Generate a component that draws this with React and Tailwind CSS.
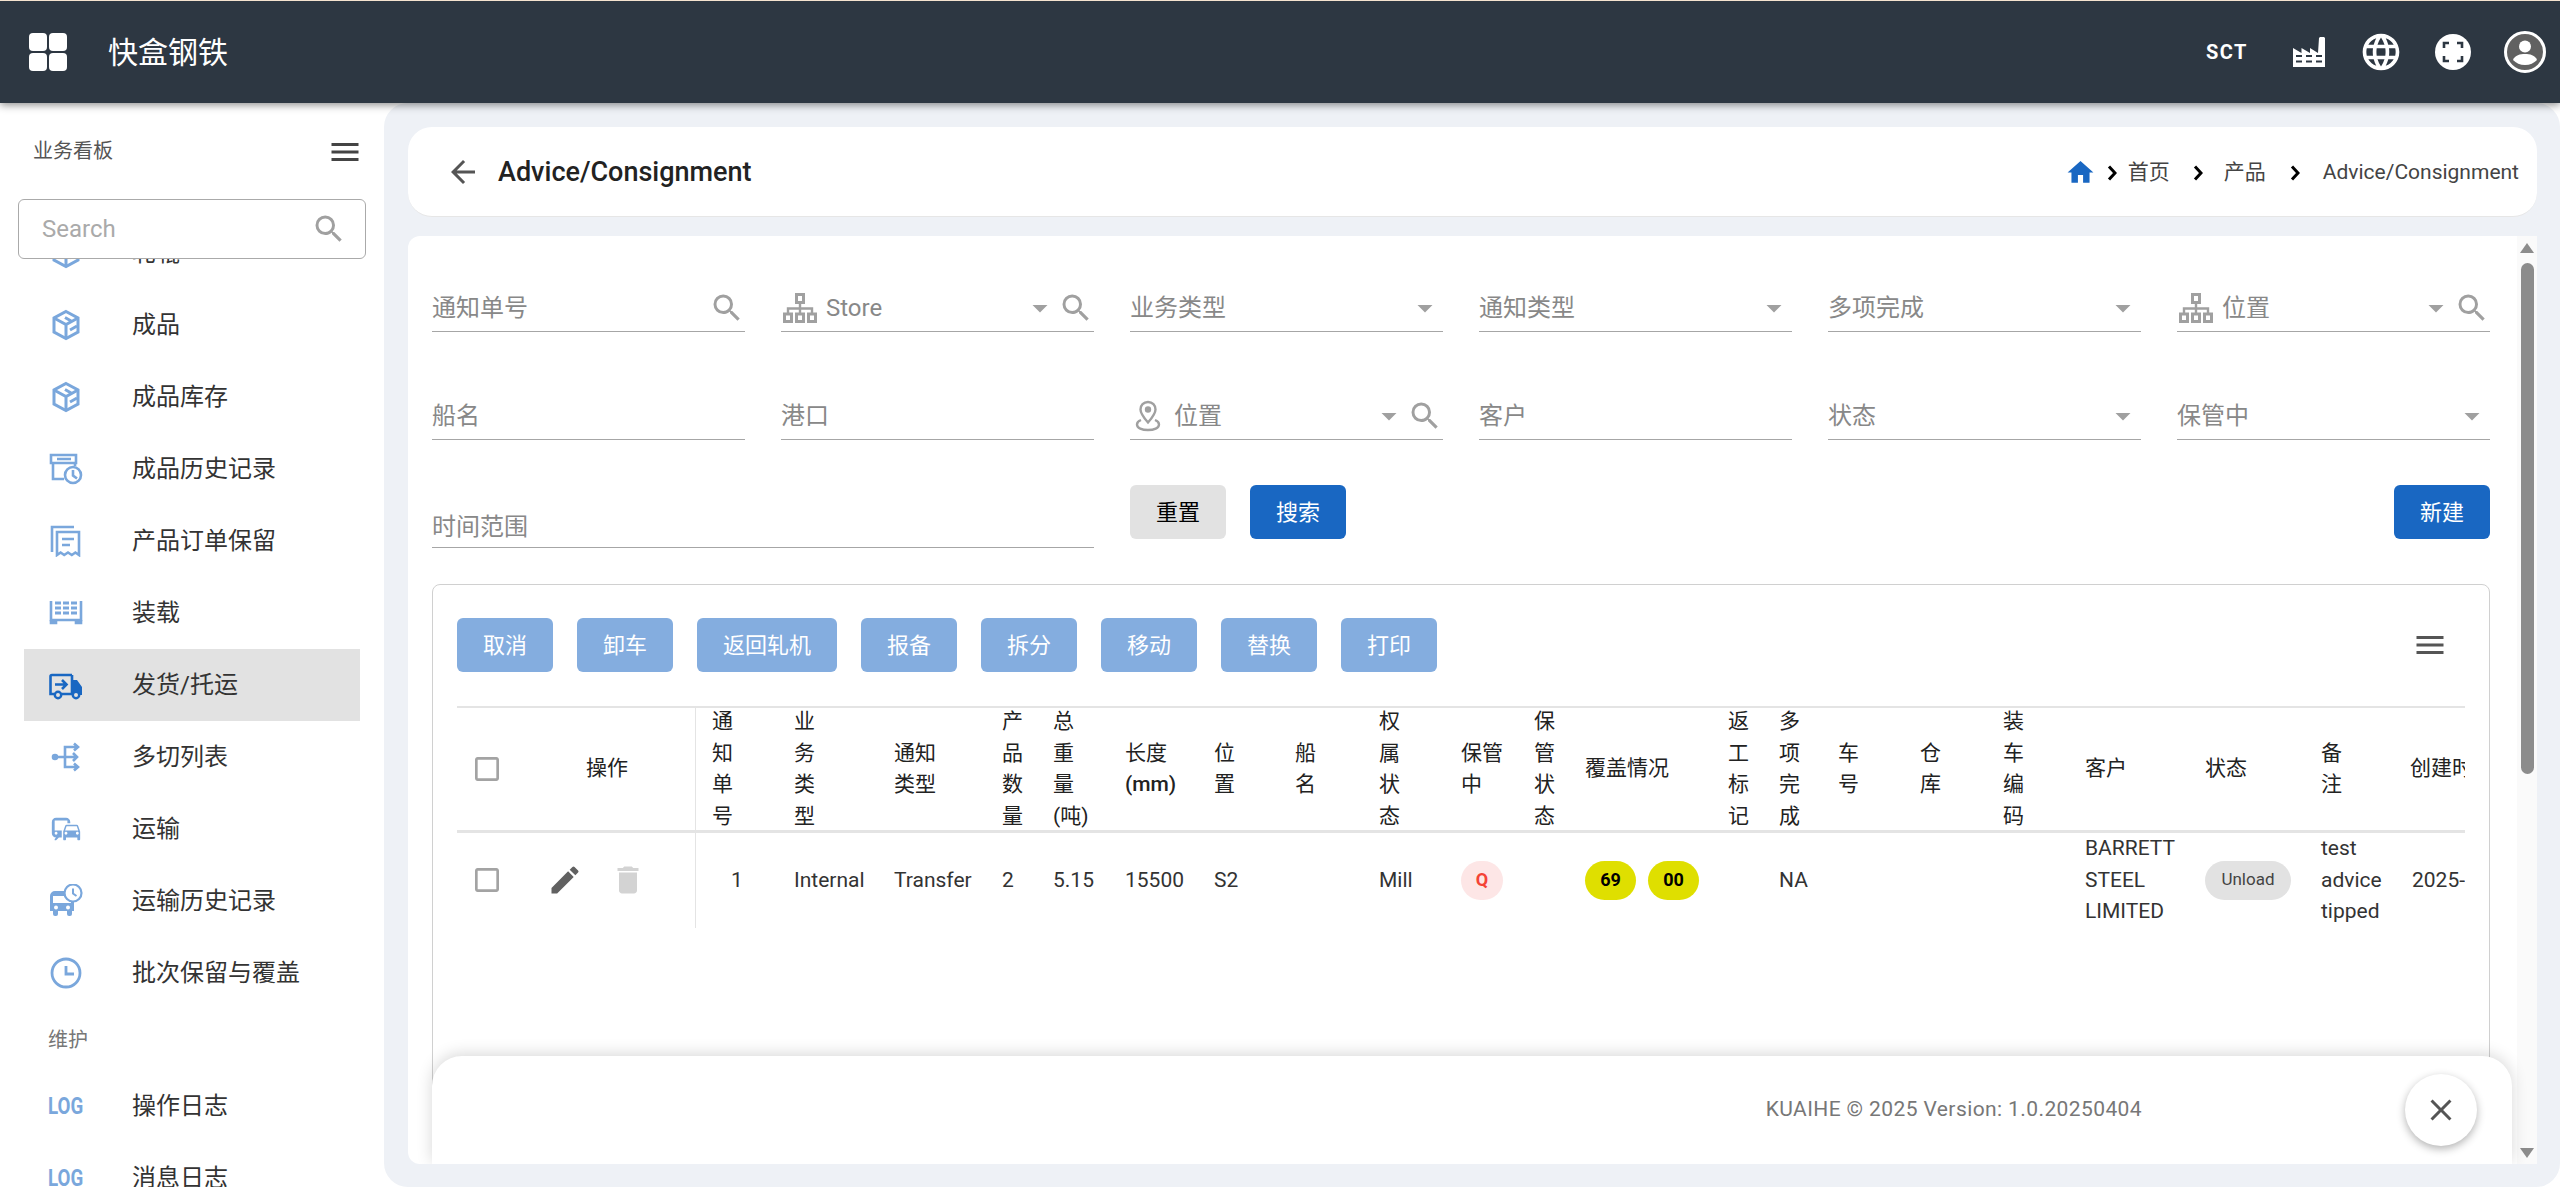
import {
  MdMenu,
  MdSearch,
  MdArrowBack,
  MdHome,
  MdLanguage,
  MdEdit,
  MdDelete,
  MdClose,
  MdCheckBoxOutlineBlank,
  MdArrowDropDown,
  MdCommute,
} from "react-icons/md";

const BoxIcon = () => (
  <svg width="32" height="32" viewBox="0 0 32 32" fill="none" stroke="currentColor" strokeWidth="3">
    <path d="M16 2.500 28 9v14l-12 6.500L4 23V9z" />
    <path d="M4 9l12 6.500L28 9M16 15.500v14M22 12.500l-7-4M27 17l-7 4" />
  </svg>
);

const HistoryIcon = () => (
  <svg width="34" height="32" viewBox="0 0 34 32" fill="none" stroke="currentColor" strokeWidth="2.600">
    <path d="M2 2h25v8H2z" />
    <path d="M4 10v16h11M26 10v3M8 6h14" />
    <circle cx="24" cy="22" r="8" />
    <path d="M24 17v5.500l4 3" />
  </svg>
);

const ReceiptIcon = () => (
  <svg width="32" height="32" viewBox="0 0 32 32" fill="none" stroke="currentColor" strokeWidth="2.600">
    <path d="M24 2H2v25" />
    <path d="M7 7h22v23l-3.600-2.500-3.600 2.500-3.800-2.500-3.800 2.500-3.600-2.500L7 30z" />
    <path d="M12 14h12M12 20h8" />
  </svg>
);

const PalletIcon = () => (
  <svg width="34" height="32" viewBox="0 0 34 32" fill="none" stroke="currentColor">
    <path d="M2 4v19h30V4" strokeWidth="2.600" />
    <path d="M6 6h22M6 11h22M6 16h22" strokeWidth="2.800" strokeDasharray="6 2" />
    <path d="M2 23v3h5v-3M27 23v3h5v-3" strokeWidth="2.600" fill="currentColor" />
  </svg>
);

const TruckIcon = () => (
  <svg width="34" height="32" viewBox="0 0 34 32" fill="none">
    <path d="M23 6H3a1.500 1.500 0 0 0-1.500 1.500V25H6" stroke="currentColor" strokeWidth="2.600" />
    <path d="M23 6v19H12" stroke="currentColor" strokeWidth="2.600" />
    <path d="M23 11h5l5 7v8h-4l-1-3h-5z" fill="currentColor" />
    <path d="M6 15.500h11M13 11l4.500 4.500L13 20" stroke="currentColor" strokeWidth="2.600" />
    <circle cx="9" cy="26" r="3.200" stroke="currentColor" strokeWidth="2.400" fill="#e2e2e2" />
    <circle cx="27" cy="26" r="3.200" stroke="currentColor" strokeWidth="2.400" fill="#e2e2e2" />
  </svg>
);

const SplitIcon = () => (
  <svg width="32" height="32" viewBox="0 0 32 32" fill="none" stroke="currentColor" strokeWidth="2.600">
    <circle cx="5" cy="16" r="2" fill="currentColor" />
    <path d="M5 16h22M23 12l4 4-4 4" />
    <path d="M15 16V6h13M24 2.500 28 6l-4 3.500" />
    <path d="M15 16v10h13M24 22.500l4 3.500-4 3.500" />
  </svg>
);

const BusClockIcon = () => (
  <svg width="34" height="34" viewBox="0 0 34 34">
    <path
      d="M1 12a5 5 0 0 1 5-5h14a5 5 0 0 1 5 5v15h-2v3a2 2 0 0 1-2 2h-1a2 2 0 0 1-2-2v-3H9v3a2 2 0 0 1-2 2H6a2 2 0 0 1-2-2v-3H1z"
      fill="currentColor"
    />
    <rect x="4" y="12" width="18" height="7" fill="#fff" />
    <circle cx="7" cy="23.500" r="2" fill="#fff" />
    <circle cx="19" cy="23.500" r="2" fill="#fff" />
    <circle cx="24" cy="9" r="8.500" fill="#fff" stroke="currentColor" strokeWidth="2.200" />
    <path d="M24 4.500V9.500l3.500 2.500" fill="none" stroke="currentColor" strokeWidth="2" />
  </svg>
);

const ClockIcon = () => (
  <svg width="32" height="32" viewBox="0 0 32 32" fill="none" stroke="currentColor" strokeWidth="2.800">
    <circle cx="16" cy="16" r="14" />
    <path d="M16 9v8h8" />
  </svg>
);

const LogIcon = () => <span className="text-[24px] font-bold leading-none scale-x-[0.78] block">LOG</span>;

const PinIcon = () => (
  <svg width="26" height="32" viewBox="0 0 26 32" fill="none" stroke="#a0a0a0" strokeWidth="2.400">
    <path d="M13 2c-4.500 0-7.500 3.300-7.500 7.500 0 4.500 4 9 7.500 13 3.500-4 7.500-8.500 7.500-13C20.500 5.300 17.500 2 13 2z" />
    <circle cx="13" cy="9.500" r="2" fill="#a0a0a0" />
    <path d="M6 20c-2.500 1-4 2.500-4 4.500C2 28 7 30 13 30s11-2 11-5.500c0-2-1.500-3.500-4-4.500" />
  </svg>
);

const TreeIcon = () => (
  <svg width="34" height="30" viewBox="0 0 34 30" fill="none" stroke="#a0a0a0" className="mr-[9px] ml-[2px]">
    <rect x="13.500" y="1.500" width="7" height="8" strokeWidth="3" />
    <path d="M17 9v12M5 21v-5.500h24V21" strokeWidth="2.400" />
    <rect x="1.500" y="21" width="7" height="7.500" strokeWidth="3" />
    <rect x="13.500" y="21" width="7" height="7.500" strokeWidth="3" />
    <rect x="25.500" y="21" width="7" height="7.500" strokeWidth="3" />
  </svg>
);

const FactoryIcon = () => (
  <svg width="32" height="30" viewBox="0 0 32 30" className="ml-[45px]">
    <path d="M0 11l8.500 5v-5l8.500 5v-5l8 5L26 1l1-1h4l1 1v29H0z" fill="#fff" />
    <path d="M3 19h6M13 19h6M23 19h6M3 24.500h6M13 24.500h6M23 24.500h6" stroke="#2d3742" strokeWidth="2.200" />
  </svg>
);

const Chevron = ({ className = "" }) => (
  <svg width="10" height="16" viewBox="0 0 10 16" fill="none" stroke="#000" strokeWidth="3" className={className}>
    <path d="M2 1.500 8 8l-6 6.500" />
  </svg>
);

const navItems = [
  { label: "轧辊", icon: BoxIcon },
  { label: "成品", icon: BoxIcon },
  { label: "成品库存", icon: BoxIcon },
  { label: "成品历史记录", icon: HistoryIcon },
  { label: "产品订单保留", icon: ReceiptIcon },
  { label: "装载", icon: PalletIcon },
  { label: "发货/托运", icon: TruckIcon, active: true },
  { label: "多切列表", icon: SplitIcon },
  { label: "运输", icon: () => <MdCommute size={36} /> },
  { label: "运输历史记录", icon: BusClockIcon },
  { label: "批次保留与覆盖", icon: ClockIcon },
  { section: "维护" },
  { label: "操作日志", icon: LogIcon },
  { label: "消息日志", icon: LogIcon },
];

const actionButtons = ["取消", "卸车", "返回轧机", "报备", "拆分", "移动", "替换", "打印"];

const columns = [
  { label: "通\n知\n单\n号", width: "w-[82px]" },
  { label: "业\n务\n类\n型", width: "w-[100px]" },
  { label: "通知\n类型", width: "w-[108px]" },
  { label: "产\n品\n数\n量", width: "w-[51px]" },
  { label: "总\n重\n量\n(吨)", width: "w-[72px]" },
  { label: "长度\n(mm)", width: "w-[89px]" },
  { label: "位\n置", width: "w-[81px]" },
  { label: "船\n名", width: "w-[84px]" },
  { label: "权\n属\n状\n态", width: "w-[82px]" },
  { label: "保管\n中", width: "w-[73px]" },
  { label: "保\n管\n状\n态", width: "w-[51px]" },
  { label: "覆盖情况", width: "w-[143px]" },
  { label: "返\n工\n标\n记", width: "w-[51px]" },
  { label: "多\n项\n完\n成", width: "w-[59px]" },
  { label: "车\n号", width: "w-[82px]" },
  { label: "仓\n库", width: "w-[83px]" },
  { label: "装\n车\n编\n码", width: "w-[82px]" },
  { label: "客户", width: "w-[120px]" },
  { label: "状态", width: "w-[116px]" },
  { label: "备\n注", width: "w-[89px]" },
  { label: "创建时间", width: "w-[200px]" },
];

function Field({ label, leading, caret, search, className = "pt-[6px]" }) {
  return (
    <div className={`h-[54px] flex items-center border-b border-[#a6a6a6] text-[24px] text-[#888] ${className}`}>
      {leading}
      <span className="flex-1">{label}</span>
      {caret && <MdArrowDropDown size={36} className="text-[#a0a0a0]" />}
      {search && <MdSearch size={36} className="text-[#a0a0a0]" />}
    </div>
  );
}

function Pill({ children, className }) {
  return (
    <span className={`h-[39px] pb-[2px] rounded-full flex items-center justify-center ${className}`}>
      {children}
    </span>
  );
}

export default function App() {
  return (
    <div className="h-screen flex flex-col overflow-hidden bg-white [font-family:Roboto,'Noto_Sans_CJK_SC',sans-serif]">
      {/* Top bar */}
      <header className="relative z-20 h-[103px] shrink-0 flex items-center bg-[#2d3742] border-t border-[#f5e3cf] shadow-[0_2px_8px_rgba(0,0,0,0.45)] text-white">
        <svg width="38" height="38" viewBox="0 0 38 38" className="ml-[29px]" fill="#fff">
          <rect width="18" height="18" rx="4" />
          <rect x="20" width="18" height="18" rx="4" />
          <rect y="20" width="18" height="18" rx="4" />
          <rect x="20" y="20" width="18" height="18" rx="4" />
        </svg>
        <span className="ml-[41px] text-[30px]">快盒钢铁</span>
        <div className="ml-auto flex items-center pr-[14px]">
          <span className="text-[20px] font-bold tracking-[1.5px]">SCT</span>
          <FactoryIcon />
          <MdLanguage size={44} className="ml-[34px]" />
          <svg width="36" height="36" viewBox="0 0 36 36" className="ml-[32px]">
            <circle cx="18" cy="18" r="18" fill="#fff" />
            <path d="M9 14V9h5M22 9h5v5M27 22v5h-5M14 27H9v-5" fill="none" stroke="#2d3742" strokeWidth="2.600" />
          </svg>
          <svg width="42" height="42" viewBox="0 0 42 42" className="ml-[33px]">
            <circle cx="21" cy="21" r="19.500" fill="#616161" stroke="#fff" strokeWidth="3" />
            <circle cx="21" cy="15.500" r="6" fill="#fff" />
            <path d="M9 29c2-5 7-6 12-6s10 1 12 6c-3 3-7 5-12 5s-9-2-12-5z" fill="#fff" />
          </svg>
        </div>
      </header>

      <div className="flex-1 flex min-h-0">
        {/* Sidebar */}
        <aside className="w-[384px] shrink-0 overflow-hidden bg-white">
          <div className="h-[96px] flex items-start pt-[32px] pl-[33px] pr-[21px] justify-between">
            <span className="text-[20px] leading-[30px] mt-[1px] text-[#555]">业务看板</span>
            <MdMenu size={36} className="-mt-[1px] text-[#444]" />
          </div>
          <div className="relative z-10 mx-[18px] h-[60px] flex items-center pl-[23px] pr-[18px] justify-between rounded-[6px] border border-[#aaa] bg-white">
            <span className="text-[24px] text-[#aaa]">Search</span>
            <MdSearch size={36} className="text-[#a0a0a0]" />
          </div>
          <nav className="mt-[-42px] px-[24px]">
            {navItems.map((item) =>
              item.section ? (
                <div key={item.section} className="h-[61px] flex items-center pl-[24px] text-[20px] text-[#777]">
                  {item.section}
                </div>
              ) : (
                <div
                  key={item.label}
                  className={`h-[72px] flex items-center pl-[25px] ${item.active ? "bg-[#e2e2e2] text-[#1967c2]" : "text-[#7aa7dc]"}`}
                >
                  <span className="w-[34px] flex items-center justify-center">
                    <item.icon />
                  </span>
                  <span className="ml-[49px] text-[24px] text-[#333]">{item.label}</span>
                </div>
              )
            )}
          </nav>
        </aside>

        {/* Main */}
        <main className="flex-1 min-w-0 flex flex-col gap-[19px] rounded-[24px] bg-[#eef1f6] pt-[24px] pl-[24px] pr-[23px] pb-[23px]">
          <div className="h-[90px] shrink-0 flex items-center rounded-[24px] bg-white border-b border-[#e6e6e6] pl-[37px] pr-[18px]">
            <MdArrowBack size={36} className="text-[#555]" />
            <span className="ml-[17px] mt-[1px] text-[27px] font-medium text-[#222]">Advice/Consignment</span>
            <div className="ml-auto mt-[2px] flex items-center text-[21px] text-[#444]">
              <MdHome size={31} className="text-[#1967c2]" />
              <Chevron className="ml-[11px]" />
              <span className="ml-[11px]">首页</span>
              <Chevron className="ml-[23px]" />
              <span className="ml-[21px]">产品</span>
              <Chevron className="ml-[24px]" />
              <span className="ml-[23px]">Advice/Consignment</span>
            </div>
          </div>

          <section className="relative flex-1 min-h-0 flex overflow-hidden rounded-l-[12px] bg-white">
            <div className="flex-1 min-w-0 pt-[42px] pl-[24px] pr-[27px]">
              {/* Filters */}
              <div className="grid grid-cols-6 gap-x-[36px] gap-y-[54px] w-[2058px]">
                <Field label="通知单号" search />
                <Field label="Store" leading={<TreeIcon />} caret search />
                <Field label="业务类型" caret />
                <Field label="通知类型" caret />
                <Field label="多项完成" caret />
                <Field label="位置" leading={<TreeIcon />} caret search />

                <Field label="船名" />
                <Field label="港口" />
                <Field label="位置" leading={<span className="mr-[13px] ml-[5px] flex"><PinIcon /></span>} caret search />
                <Field label="客户" />
                <Field label="状态" caret />
                <Field label="保管中" caret />

                <Field label="时间范围" className="col-span-2 pt-[12px]" />
                <div className="col-span-3 flex gap-[24px] -mt-[9px]">
                  <button className="h-[54px] w-[96px] rounded-[6px] bg-[#e2e2e2] text-[22px] text-black">重置</button>
                  <button className="h-[54px] w-[96px] rounded-[6px] bg-[#1967c2] text-[22px] text-white">搜索</button>
                </div>
                <div className="flex justify-end -mt-[9px]">
                  <button className="h-[54px] w-[96px] rounded-[6px] bg-[#1967c2] text-[22px] text-white">新建</button>
                </div>
              </div>

              {/* Table panel */}
              <div className="mt-[36px] w-[2058px] h-[700px] rounded-[8px] border border-[#d0d0d0] pt-[33px] px-[24px]">
                <div className="flex items-center gap-[24px]">
                  {actionButtons.map((label) => (
                    <button key={label} className="h-[54px] px-[26px] rounded-[6px] bg-[#84addf] text-[22px] text-white">
                      {label}
                    </button>
                  ))}
                  <MdMenu size={36} className="ml-auto mr-[17px] text-[#555]" />
                </div>

                <div className="mt-[34px] overflow-hidden">
                  <table className="table-fixed w-[2137px] border-separate border-spacing-0 text-[21px] leading-[31.5px] text-[#333]">
                    <thead>
                      <tr>
                        <th className="w-[60px] border-t-2 border-b-[3px] border-[#e4e4e4] pl-[14px] font-normal">
                          <MdCheckBoxOutlineBlank size={32} className="text-[#a3a3a3]" />
                        </th>
                        <th className="w-[179px] border-t-2 border-b-[3px] border-r border-[#e4e4e4] pl-[2px] font-normal text-[#222]">操作</th>
                        {columns.map((col) => (
                          <th
                            key={col.label}
                            className={`${col.width} border-t-2 border-b-[3px] border-[#e4e4e4] pl-[16px] text-left font-normal text-[#222]`}
                          >
                            <div className="-my-[2px] whitespace-pre-line">
                              {col.label === "长度\n(mm)" ? (
                                <>
                                  长度
                                  <br />
                                  <span className="font-medium">(mm)</span>
                                </>
                              ) : (
                                col.label
                              )}
                            </div>
                          </th>
                        ))}
                      </tr>
                    </thead>
                    <tbody>
                      <tr className="h-[94px]">
                        <td className="pl-[14px]">
                          <MdCheckBoxOutlineBlank size={32} className="text-[#a3a3a3]" />
                        </td>
                        <td className="border-r border-[#e4e4e4] pl-[30px]">
                          <div className="flex gap-[27px]">
                            <MdEdit size={36} className="text-[#616161]" />
                            <MdDelete size={36} className="text-[#d3d3d3]" />
                          </div>
                        </td>
                        <td className="pr-[0px] text-center">1</td>
                        <td className="pl-[16px]">Internal</td>
                        <td className="pl-[16px]">Transfer</td>
                        <td className="pl-[16px]">2</td>
                        <td className="pl-[16px]">5.15</td>
                        <td className="pl-[16px]">15500</td>
                        <td className="pl-[16px]">S2</td>
                        <td />
                        <td className="pl-[16px]">Mill</td>
                        <td className="pl-[16px]">
                          <Pill className="w-[42px] bg-[#fde6e6] text-[#f44336] text-[18px] font-bold">Q</Pill>
                        </td>
                        <td />
                        <td className="pl-[16px]">
                          <div className="flex gap-[12px]">
                            <Pill className="w-[51px] bg-[#dfdf00] text-black text-[18px] font-bold">69</Pill>
                            <Pill className="w-[51px] bg-[#dfdf00] text-black text-[18px] font-bold">00</Pill>
                          </div>
                        </td>
                        <td />
                        <td className="pl-[16px]">NA</td>
                        <td />
                        <td />
                        <td />
                        <td className="pl-[16px]">BARRETT STEEL LIMITED</td>
                        <td className="pl-[16px]">
                          <Pill className="w-[86px] bg-[#e2e2e2] text-[#444] text-[17px]">Unload</Pill>
                        </td>
                        <td className="pl-[16px]">test advice tipped</td>
                        <td className="pl-[18px] whitespace-nowrap">2025-</td>
                      </tr>
                    </tbody>
                  </table>
                </div>
              </div>
            </div>

            {/* Scrollbar */}
            <div className="w-[20px] shrink-0 flex flex-col items-center bg-[#fafafa] pt-[7px] pb-[6px]">
              <span className="w-0 h-0 border-x-[7px] border-x-transparent border-b-[10px] border-b-[#8c8c8c]" />
              <span className="mt-[10px] w-[13px] h-[511px] rounded-full bg-[#8c8c8c]" />
              <span className="mt-auto w-0 h-0 border-x-[7px] border-x-transparent border-t-[10px] border-t-[#8c8c8c]" />
            </div>

            {/* Floating footer */}
            <div className="absolute left-[24px] right-[25px] bottom-0 h-[108px] flex items-center justify-end rounded-t-[30px] bg-white shadow-[0_-2px_16px_rgba(0,0,0,0.16)] pr-[35px]">
              <span className="mr-[263px] text-[21px] tracking-[0.4px] text-[#777]">KUAIHE © 2025 Version: 1.0.20250404</span>
              <span className="w-[72px] h-[72px] flex items-center justify-center rounded-full bg-white shadow-[0_3px_8px_rgba(0,0,0,0.3)]">
                <MdClose size={36} className="text-[#555]" />
              </span>
            </div>
          </section>
        </main>
      </div>
    </div>
  );
}
